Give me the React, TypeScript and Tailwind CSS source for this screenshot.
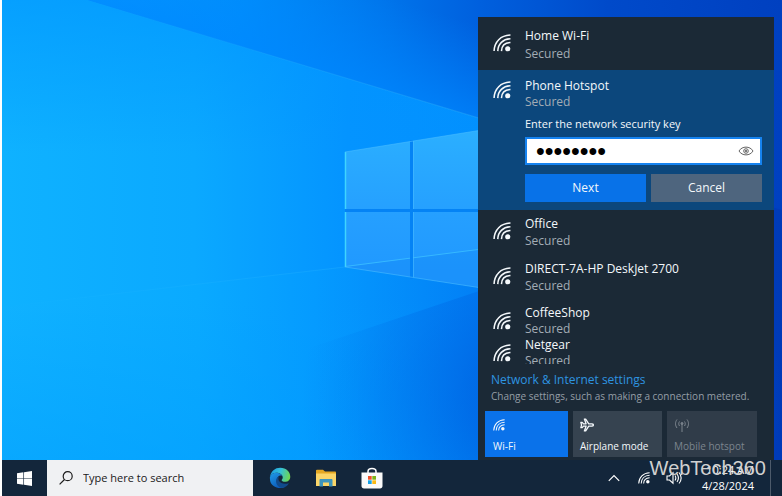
import { useState } from 'react';

type Network = { name: string; rowClass: string; lineClass: string };

const networks: Network[] = [
  { name: 'Office', rowClass: 'h-[45px]', lineClass: 'leading-[17px]' },
  { name: 'DIRECT-7A-HP DeskJet 2700', rowClass: 'h-[45px]', lineClass: 'leading-[17px]' },
  { name: 'CoffeeShop', rowClass: 'h-8', lineClass: 'leading-4' },
  { name: 'Netgear', rowClass: 'h-8', lineClass: 'leading-4' },
];

function WifiIcon({ className }: { className: string }) {
  return (
    <svg viewBox="0 0 20 20" className={className} fill="none" stroke="currentColor" strokeWidth="1.7">
      <path d="M1.2 19C1.5 8.8 8.6 1.5 19.4 1.2" />
      <path d="M5.3 19C5.6 11 11 5.6 19.4 5.3" />
      <path d="M9.4 19C9.6 13.3 13.3 9.6 19.4 9.4" />
      <circle cx="16.4" cy="16.4" r="2.9" fill="currentColor" stroke="none" />
    </svg>
  );
}

function Wallpaper() {
  return (
    <svg
      viewBox="0 0 780 460"
      preserveAspectRatio="none"
      className="absolute inset-0 h-full w-full"
      aria-hidden="true"
    >
      <defs>
        <linearGradient id="base" x1="0" y1="0" x2="1" y2="0">
          <stop offset="0" stopColor="#10b2ff" />
          <stop offset="0.25" stopColor="#0aaaff" />
          <stop offset="0.4" stopColor="#059bff" />
          <stop offset="0.61" stopColor="#0280f6" />
          <stop offset="0.8" stopColor="#0050d0" />
          <stop offset="1" stopColor="#003ab8" />
        </linearGradient>
        <linearGradient id="sky" gradientUnits="userSpaceOnUse" x1="85" y1="0" x2="780" y2="0">
          <stop offset="0" stopColor="#069dff" />
          <stop offset="0.22" stopColor="#008ffb" />
          <stop offset="0.42" stopColor="#0076ec" />
          <stop offset="0.565" stopColor="#0060de" />
          <stop offset="0.75" stopColor="#004aca" />
          <stop offset="1" stopColor="#0040c0" />
        </linearGradient>
        <linearGradient id="skyGlow" gradientUnits="userSpaceOnUse" x1="309" y1="-26" x2="283" y2="60">
          <stop offset="0" stopColor="#0088ff" stopOpacity="0" />
          <stop offset="1" stopColor="#0088ff" stopOpacity="0.7" />
        </linearGradient>
        <linearGradient id="beam" x1="0" y1="0" x2="1" y2="0">
          <stop offset="0" stopColor="#0fb2ff" />
          <stop offset="0.4" stopColor="#0ba9ff" />
          <stop offset="0.72" stopColor="#0494ff" />
          <stop offset="1" stopColor="#0290ff" />
        </linearGradient>
        <linearGradient id="topShade" x1="0" y1="0" x2="0" y2="1">
          <stop offset="0" stopColor="#0094ff" stopOpacity="0.6" />
          <stop offset="0.5" stopColor="#0094ff" stopOpacity="0" />
        </linearGradient>
        <linearGradient id="bottomShade" x1="0" y1="0" x2="0" y2="1">
          <stop offset="0" stopColor="#009cff" stopOpacity="0" />
          <stop offset="1" stopColor="#009cff" stopOpacity="0.45" />
        </linearGradient>
        <radialGradient id="floor" gradientUnits="userSpaceOnUse" cx="540" cy="400" r="240">
          <stop offset="0" stopColor="#0060e0" />
          <stop offset="0.3" stopColor="#0066e4" stopOpacity="0.8" />
          <stop offset="0.65" stopColor="#0070ea" stopOpacity="0.4" />
          <stop offset="1" stopColor="#0080f2" stopOpacity="0" />
        </radialGradient>
        <linearGradient id="pane" x1="0" y1="0" x2="0" y2="1">
          <stop offset="0" stopColor="#2bafff" />
          <stop offset="0.55" stopColor="#259fff" />
          <stop offset="1" stopColor="#1f97ff" />
        </linearGradient>
        <linearGradient id="ray" x1="0" y1="0" x2="1" y2="0">
          <stop offset="0" stopColor="#35bfff" stopOpacity="0" />
          <stop offset="1" stopColor="#35bfff" stopOpacity="0.4" />
        </linearGradient>
      </defs>
      <rect width="780" height="460" fill="url(#base)" />
      <rect y="300" width="480" height="160" fill="url(#bottomShade)" />
      <path d="M200 384L480 290H780V460H200Z" fill="url(#floor)" />
      <path d="M0 0H85L480 119V249L343 267L0 307Z" fill="url(#beam)" />
      <path d="M0 0H85L480 119V249L343 267L0 307Z" fill="url(#topShade)" />
      <path d="M85 0H780V210L480 119Z" fill="url(#sky)" />
      <path d="M85 0H480V119Z" fill="url(#skyGlow)" />
      <path d="M85 0L480 119" stroke="url(#ray)" strokeWidth="1" />
      <path d="M0 307L343 267" stroke="url(#ray)" strokeWidth="0.6" />
      <path d="M343 152L480 130V288L343 267Z" fill="url(#pane)" />
      <path d="M343 267L480 249V288Z" fill="#0a80ee" fillOpacity="0.25" />
      <path d="M343 266.5L480 249" stroke="#36b8ff" strokeWidth="1" />
      <path d="M409.5 140V279M343 210.5H480" stroke="#0483f5" strokeWidth="3" />
      <path d="M343.5 152V209M343.5 212V267" stroke="#3fd4ff" strokeWidth="1.5" />
      <path d="M343 152L480 130M343 267L480 288M411.5 141V209M411.5 212V277" stroke="#48bcff" strokeWidth="0.6" />
    </svg>
  );
}

function NetworkText({ name, lineClass }: { name: string; lineClass: string }) {
  return (
    <span className={`flex flex-col ${lineClass}`}>
      <span>{name}</span>
      <span className="text-[#a3acb5]">Secured</span>
    </span>
  );
}

function Flyout() {
  const [key, setKey] = useState('password');
  const [visible, setVisible] = useState(false);

  return (
    <section
      aria-label="Networks"
      className="relative mt-[17px] mr-2 flex w-[296px] flex-col bg-[#1b2936] text-[12px] text-[#f4f8fb]"
    >
      <button className="flex h-[53px] gap-[14px] px-[15px] pt-[10px] text-left">
        <WifiIcon className="mt-[7px] h-[18px] w-[18px] shrink-0" />
        <NetworkText name="Home Wi-Fi" lineClass="leading-[18px]" />
      </button>

      <form className="h-[140px] bg-[#0c477c] pt-2 pr-3 pl-[15px]" onSubmit={(e) => e.preventDefault()}>
        <div className="flex h-9 gap-[14px]">
          <WifiIcon className="mt-[3px] h-[18px] w-[18px] shrink-0" />
          <NetworkText name="Phone Hotspot" lineClass="leading-4" />
        </div>
        <div className="pl-8">
          <label htmlFor="network-key" className="block text-[11px] leading-5">
            Enter the network security key
          </label>
          <div className="mt-[3px] flex h-7 items-center border-2 border-[#1683f0] bg-white pr-[6px]">
            <input
              id="network-key"
              type={visible ? 'text' : 'password'}
              value={key}
              onChange={(e) => setKey(e.target.value)}
              className="min-w-0 flex-1 pl-[9px] font-['Liberation_Sans',sans-serif] text-[25px] leading-6 text-black outline-none"
            />
            <button type="button" aria-label="Show key" onClick={() => setVisible(!visible)}>
              <svg viewBox="0 0 16 12" className="h-3 w-4" fill="none" stroke="#666" strokeWidth="1">
                <path d="M1 6C4 .8 12 .8 15 6C12 11.2 4 11.2 1 6Z" />
                <circle cx="8" cy="6" r="2.3" />
                <circle cx="8" cy="6" r="0.8" fill="#666" />
              </svg>
            </button>
          </div>
          <div className="mt-[9px] flex gap-[5px]">
            <button className="h-7 flex-1 bg-[#0872e8]">Next</button>
            <button type="button" className="h-7 w-[111px] bg-[#4e657e]">
              Cancel
            </button>
          </div>
        </div>
      </form>

      <ul className="h-[154px] overflow-hidden pt-[5px]">
        {networks.map((network) => (
          <li key={network.name}>
            <button className={`flex w-full gap-[14px] px-[15px] text-left ${network.rowClass}`}>
              <WifiIcon className="mt-[7px] h-[18px] w-[18px] shrink-0" />
              <NetworkText name={network.name} lineClass={network.lineClass} />
            </button>
          </li>
        ))}
      </ul>

      <div className="mt-2 px-[13px]">
        <a href="#settings" className="block leading-4 text-[#2e94e0]">
          Network &amp; Internet settings
        </a>
        <p className="text-[10px] leading-4 whitespace-nowrap text-[#959ea6]">
          Change settings, such as making a connection metered.
        </p>
      </div>

      <div className="mt-[7px] flex gap-[5px] pl-[7px] text-[10px]">
        <button className="flex h-[46px] w-[83px] flex-col justify-between bg-[#0a72ea] p-2 pb-[3px] text-left leading-4">
          <WifiIcon className="h-3 w-3" />
          Wi-Fi
        </button>
        <button className="flex h-[46px] w-[89px] flex-col justify-between bg-[#364350] p-[7px] pb-[3px] text-left leading-4 whitespace-nowrap">
          <svg viewBox="0 0 16 16" className="h-[14px] w-[14px]" fill="none" stroke="currentColor" strokeWidth="1.5" strokeLinejoin="round">
            <path d="M1 5H2.500L4 6.700H7L5 1.200H6.500L10 6.700H13.500C14.500 6.700 15.300 7.300 15.300 8S14.500 9.300 13.500 9.300H10L6.500 14.800H5L7 9.300H4L2.500 11H1L1.800 8Z" />
          </svg>
          Airplane mode
        </button>
        <button disabled className="flex h-[46px] w-[90px] flex-col justify-between bg-[#303c49] p-[7px] pb-[3px] text-left leading-4 whitespace-nowrap text-[#7c858e]">
          <svg viewBox="0 0 16 14" className="h-[14px] w-4" fill="none" stroke="currentColor" strokeWidth="1">
            <path d="M8 6V14M5.500 3.500C4.500 5 4.500 6.500 5.500 8M10.500 3.500C11.500 5 11.500 6.500 10.500 8M3 1.500C1 4.200 1 7.300 3 10M13 1.500C15 4.200 15 7.300 13 10" />
            <circle cx="8" cy="5.5" r="1" fill="currentColor" />
          </svg>
          Mobile hotspot
        </button>
      </div>
    </section>
  );
}

function EdgeIcon() {
  return (
    <svg viewBox="0 0 24 24" className="h-[22px] w-[22px]">
      <defs>
        <linearGradient id="edgeTop" x1="0" y1="0.3" x2="1" y2="0.5">
          <stop offset="0" stopColor="#1b9de2" />
          <stop offset="0.5" stopColor="#35c1d8" />
          <stop offset="1" stopColor="#6fd650" />
        </linearGradient>
        <linearGradient id="edgeSide" x1="0" y1="0" x2="0.6" y2="1">
          <stop offset="0" stopColor="#1f9be8" />
          <stop offset="1" stopColor="#0c59b8" />
        </linearGradient>
      </defs>
      <path d="M1 11C2 4.500 6.500.8 12.200.8C19 .8 23.200 5.500 23.200 10.500C23.200 14 20.500 16.200 17.500 16.200C15 16.200 13.800 15.400 13.800 14.500C13.800 13.800 15 13.200 15 11.500C15 8.500 11.500 6.300 8 6.300C5 6.300 2.200 8 1 11Z" fill="url(#edgeTop)" />
      <path d="M1 11C2.200 8 5 6.300 8 6.300C11 6.300 13.500 8 14.500 9.800C11.500 8.300 8.800 10.500 8.800 14C8.800 18.500 12.200 22 17 22C12 24.500 1 22.500 1 12.500Z" fill="url(#edgeSide)" />
      <path d="M10.800 10.400C8.800 14.500 12.500 20.300 21.700 17.700C20.300 20.300 17.800 22 15.300 22.700C10 22.700 7.500 18.500 7.700 15C7.800 12.500 9 11 10.800 10.400Z" fill="#114a8b" />
    </svg>
  );
}

function FolderIcon() {
  return (
    <svg viewBox="0 0 22 18" className="h-[18px] w-[22px]">
      <path d="M1 1.500C1 1 1.400.7 2 .7H8L10 2.500H20C20.600 2.500 21 2.900 21 3.500V16H1Z" fill="#e5a823" />
      <path d="M1 4.500H21V17H1Z" fill="#fbd568" />
      <path d="M4.500 17.500V11C4.500 10.300 5 10 5.500 10H16.500C17 10 17.500 10.300 17.500 11V17.500H14V13.500H8V17.500Z" fill="#3d94bd" />
    </svg>
  );
}

function StoreIcon() {
  return (
    <svg viewBox="0 0 22 22" className="h-[22px] w-[22px]">
      <path d="M7 6V4.500C7 .5 15 .5 15 4.500V6" fill="none" stroke="#fff" strokeWidth="1.5" />
      <path d="M.5 5.500H21.500V19C21.500 20.500 20.500 21.500 19 21.500H3C1.500 21.500.5 20.500.5 19Z" fill="#fafafa" />
      <path d="M7 9H10.700V12.700H7Z" fill="#f05028" />
      <path d="M11.300 9H15V12.700H11.300Z" fill="#7cb518" />
      <path d="M7 13.300H10.700V17H7Z" fill="#15a2e8" />
      <path d="M11.300 13.300H15V17H11.300Z" fill="#fab914" />
    </svg>
  );
}

function Taskbar() {
  return (
    <footer className="flex h-9 items-stretch bg-[#13263b] text-[11px] text-white">
      <button aria-label="Start" className="flex w-[45px] items-center justify-center">
        <svg viewBox="0 0 16 16" className="h-[15px] w-[15px]" fill="#fff">
          <path d="M0 2.300L6.800 1.400V7.600H0ZM7.500 1.300L16 0V7.600H7.500ZM0 8.300H6.800V14.600L0 13.700ZM7.500 8.300H16V16L7.500 14.700Z" />
        </svg>
      </button>
      <label className="flex w-[206px] items-center gap-[10px] bg-[#f0f1f3] pl-3">
        <svg viewBox="0 0 14 14" className="h-[14px] w-[14px] shrink-0" fill="none" stroke="#1c1c1c" strokeWidth="1.2">
          <circle cx="8.7" cy="5.2" r="4.5" />
          <path d="M5.500 8.500L.6 13.400" />
        </svg>
        <input
          type="search"
          aria-label="Search"
          placeholder="Type here to search"
          className="min-w-0 flex-1 outline-none placeholder:text-[#202020]"
        />
      </label>
      <nav className="flex items-center gap-6 pl-4">
        <button aria-label="Edge">
          <EdgeIcon />
        </button>
        <button aria-label="File Explorer">
          <FolderIcon />
        </button>
        <button aria-label="Store">
          <StoreIcon />
        </button>
      </nav>
      <div className="ml-auto flex items-center">
        <button aria-label="Show hidden icons">
          <svg viewBox="0 0 12 8" className="h-2 w-3" fill="none" stroke="#fff" strokeWidth="1.2">
            <path d="M.8 6.800L6 1.500L11.200 6.800" />
          </svg>
        </button>
        <button aria-label="Network" className="ml-[18px]">
          <WifiIcon className="h-3 w-3" />
        </button>
        <button aria-label="Volume" className="ml-4">
          <svg viewBox="0 0 16 14" className="h-[14px] w-4" fill="none" stroke="#fff" strokeWidth="1.1">
            <path d="M1 5H3.500L7 1.800V12.200L3.500 9H1Z" />
            <path d="M9 4.500C10 6 10 8 9 9.500M11 3C12.800 5.500 12.800 8.500 11 11M13 1.500C15.600 4.800 15.600 9.200 13 12.500" />
          </svg>
        </button>
        <div className="ml-5 text-right leading-4">
          <p>10:24 AM</p>
          <p>4/28/2024</p>
        </div>
        <div className="ml-4 h-full w-3 border-l border-[#4d5b6b]" />
      </div>
    </footer>
  );
}

export default function App() {
  return (
    <main className="relative flex min-h-screen flex-col overflow-hidden border-l-2 border-white font-['Open_Sans','Noto_Sans',sans-serif]">
      <div className="relative flex flex-1 justify-end">
        <Wallpaper />
        <Flyout />
      </div>
      <Taskbar />
      <p className="pointer-events-none absolute right-4 bottom-4 font-['Liberation_Sans',sans-serif] text-[20px] leading-6 text-[#d0d0d0]">
        WebTech360
      </p>
    </main>
  );
}
